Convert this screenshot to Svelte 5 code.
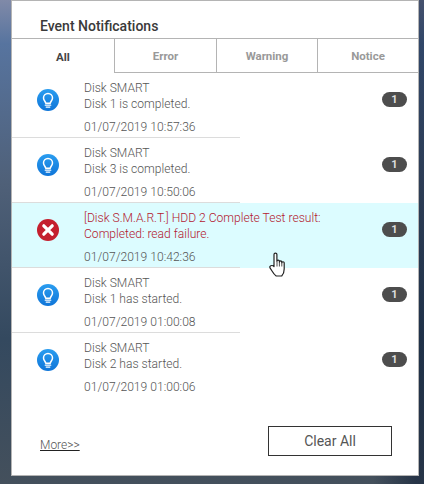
<script>
  const rows = [
    { t: 'Disk SMART', m: 'Disk 1 is completed.', d: '01/07/2019 10:57:36' },
    { t: 'Disk SMART', m: 'Disk 3 is completed.', d: '01/07/2019 10:50:06' },
    { t: '[Disk S.M.A.R.T.] HDD 2 Complete Test result:', m: 'Completed: read failure.', d: '01/07/2019 10:42:36', err: true },
    { t: 'Disk SMART', m: 'Disk 1 has started.', d: '01/07/2019 01:00:08' },
    { t: 'Disk SMART', m: 'Disk 2 has started.', d: '01/07/2019 01:00:06' }
  ];
  const tabs = ['All', 'Error', 'Warning', 'Notice'];
</script>

<div class="page">
  <section class="panel">
    <h1>Event Notifications</h1>
    <nav class="tabs">
      {#each tabs as tab, i}
        <div class="tab" class:active={i === 0}>{tab}</div>
      {/each}
    </nav>
    <div class="list">
      {#each rows as r}
        <article class="row" class:err={r.err}>
          <div class="icon">
            {#if r.err}
              <svg width="22" height="22" viewBox="0 0 22 22">
                <circle cx="11" cy="11" r="11" fill="#c41f2e" />
                <path d="M6.800 6.800 15.200 15.200M15.200 6.800 6.800 15.200" stroke="#fff" stroke-width="3.200" stroke-linecap="round" />
              </svg>
            {:else}
              <svg width="22" height="22" viewBox="0 0 22 22">
                <defs>
                  <linearGradient id="blue" x1="0" y1="0" x2="0" y2="1">
                    <stop offset="0" stop-color="#2a9df0" />
                    <stop offset="1" stop-color="#0f75d8" />
                  </linearGradient>
                </defs>
                <circle cx="11" cy="11" r="11" fill="url(#blue)" />
                <path d="M8.700 14.200c0-1.600-2.200-2.600-2.200-5.300a4.500 4.500 0 0 1 9 0c0 2.700-2.200 3.700-2.200 5.300z" fill="none" stroke="#fff" stroke-width="1.500" stroke-linejoin="round" />
                <path d="M8.300 16.200h5.400M9.200 18.100h3.600" stroke="#fff" stroke-width="1.300" stroke-linecap="round" />
              </svg>
            {/if}
          </div>
          <div class="text">
            <div class="msg">{r.t}<br />{r.m}</div>
            <div class="date">{r.d}</div>
          </div>
          <span class="badge">1</span>
        </article>
      {/each}
    </div>
    <footer>
      <a href="#more">More&gt;&gt;</a>
      <button>Clear All</button>
    </footer>
  </section>
  <svg class="cursor" width="18" height="26" viewBox="0 0 18 26">
    <path d="M5 14.500V2.600c0-2 2.900-2 2.900 0v6.600c0-1.500 2.500-1.500 2.500 0v.7c0-1.400 2.400-1.400 2.400 0v.8c0-1.300 2.400-1.300 2.400 0v6.300c0 3-1.500 6-2.500 7H7.200c-1.500-1-3-3-4.200-5L1 15.900c-1-2 2-3.400 4-1.400z" fill="#fff" stroke="#222" stroke-width="1.200" stroke-linejoin="round" />
    <path d="M8 9.500v5M10.400 10v4.500M12.800 10.700v3.800" stroke="#222" stroke-width=".8" fill="none" />
  </svg>
</div>

<style>
  :global(body) {
    margin: 0;
  }
  .page {
    position: relative;
    box-sizing: border-box;
    width: 424px;
    height: 484px;
    padding: 0 5px 0 11px;
    overflow: hidden;
    background:
      linear-gradient(90deg, rgba(10, 25, 50, 0) 88%, rgba(10, 25, 50, 0.5) 98%),
      linear-gradient(180deg, #808aa8 0%, #57749f 9%, #4f6078 38%, #34495f 70%, #44505c 100%);
    font-family: Roboto, "Liberation Sans", sans-serif;
  }
  .panel {
    box-sizing: border-box;
    display: flex;
    flex-direction: column;
    height: 476px;
    border: 1px solid #b4b4b4;
    background: #fff;
  }
  h1 {
    margin: 0;
    padding: 17px 0 0 28px;
    height: 37px;
    box-sizing: border-box;
    font-size: 14px;
    line-height: 17px;
    font-weight: 500;
    color: #3a3a3a;
  }
  .tabs {
    display: grid;
    grid-template-columns: 102px 102px 101px 1fr;
    height: 35px;
    box-sizing: border-box;
    border-top: 1px solid #b4b4b4;
    padding-top: 0;
  }
  .tab {
    display: flex;
    align-items: center;
    justify-content: center;
    box-sizing: border-box;
    padding-top: 1px;
    border-bottom: 1px solid #b4b4b4;
    border-left: 1px solid #b4b4b4;
    font-size: 11.5px;
    font-weight: 700;
    color: #999;
  }
  .tab.active {
    border-bottom: 0;
    border-left: 0;
    color: #444;
  }
  .list {
    flex: 1;
  }
  .row {
    position: relative;
    display: flex;
    height: 65px;
    box-sizing: border-box;
  }
  .row:not(:last-child)::after {
    content: "";
    position: absolute;
    left: 0;
    bottom: 0;
    width: 228px;
    height: 1px;
    background: #dcdcdc;
  }
  .row.err {
    background: #dcfcff;
  }
  .icon {
    flex: none;
    width: 72px;
    padding: 16px 0 0 25px;
    box-sizing: border-box;
  }
  .icon svg {
    display: block;
  }
  .text {
    flex: 1;
    padding-top: 7px;
    font-size: 12.1px;
    font-weight: 300;
    color: #555;
  }
  .msg {
    line-height: 16px;
  }
  .err .msg {
    color: #b3182f;
  }
  .date {
    margin-top: 7px;
    line-height: 16px;
  }
  .badge {
    flex: none;
    align-self: flex-start;
    width: 25px;
    height: 15px;
    margin: 19px 11px 0 0;
    border-radius: 8px;
    background: #4d4d4d;
    color: #ddd;
    font-size: 11px;
    font-weight: 700;
    line-height: 15px;
    text-align: center;
  }
  footer {
    display: flex;
    align-items: center;
    justify-content: space-between;
    padding: 0 26px 19px 28px;
  }
  a {
    margin-top: 7px;
    font-size: 12px;
    font-weight: 300;
    color: #555;
    text-decoration-color: #222;
  }
  button {
    width: 124px;
    height: 30px;
    border: 1px solid #333;
    border-radius: 0;
    background: #fff;
    color: #555;
    font: 400 14px Roboto, "Liberation Sans", sans-serif;
  }
  .cursor {
    position: absolute;
    left: 269px;
    top: 252px;
  }
</style>
